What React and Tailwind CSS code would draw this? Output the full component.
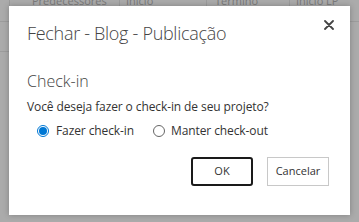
import React from "react";

export default function App() {
  return (
    <div
      className="relative w-[359px] h-[222px] overflow-hidden bg-[#ababab]"
      style={{ fontFamily: '"Open Sans", "Noto Sans", sans-serif' }}
    >
      {/* faded table header behind the overlay */}
      <div className="flex h-[22px] border-b border-[#9c9c9c] text-[11px] text-[#7a7a7a]">
        <div className="w-[10px] border-r border-[#9c9c9c]" />
        <div className="w-[110px] border-r border-[#9c9c9c] pl-[22px] leading-[12px] -mt-[5px] overflow-hidden whitespace-nowrap">Predecessores</div>
        <div className="w-[87px] border-r border-[#9c9c9c] pl-[6px] leading-[12px] -mt-[5px] overflow-hidden whitespace-nowrap">Início</div>
        <div className="w-[83px] border-r border-[#9c9c9c] pl-[8px] leading-[12px] -mt-[5px] overflow-hidden whitespace-nowrap">Término</div>
        <div className="flex-1 pl-[6px] leading-[12px] -mt-[5px] overflow-hidden whitespace-nowrap">Início LP</div>
      </div>
      <div className="h-[30px] w-[10px] border-b border-[#9c9c9c]" />

      {/* dialog */}
      <div className="absolute left-[9px] top-[6px] w-[341px] h-[209px] bg-white shadow-[0_0_6px_rgba(0,0,0,0.25)] flex flex-col">
        <div className="flex items-start justify-between pl-[18px] pr-[16px] pt-[14px]">
          <div className="text-[18px] font-light text-[#444] leading-[26px] tracking-[-0.3px]">
            Fechar - Blog - Publicação
          </div>
          <svg width="10" height="10" viewBox="0 0 10 10" className="mt-0">
            <path d="M1 1 L9 9 M9 1 L1 9" stroke="#444" strokeWidth="1.8" strokeLinecap="round" />
          </svg>
        </div>
        <div className="pl-[18px] mt-[24px] text-[16px] font-light text-[#444] leading-[22px]">Check-in</div>
        <div className="pl-[18px] mt-[6px] text-[12px] text-[#333] leading-[18px] tracking-[-0.1px]">
          Você deseja fazer o check-in de seu projeto?
        </div>
        <div className="flex items-center pl-[28px] mt-[6px] text-[12px] text-[#333] leading-[18px] tracking-[-0.1px]">
          <span className="w-[12px] h-[12px] rounded-full border border-[#0078d4] flex items-center justify-center">
            <span className="w-[8px] h-[8px] rounded-full bg-[#0078d4]" />
          </span>
          <span className="ml-[7px]">Fazer check-in</span>
          <span className="ml-[19px] w-[12px] h-[12px] rounded-full border border-[#666]" />
          <span className="ml-[6px]">Manter check-out</span>
        </div>
        <div className="flex justify-end gap-[14px] pr-[21px] mt-[17px]">
          <button className="w-[62px] h-[29px] rounded-[3px] border-2 border-[#1a1a1a] bg-white text-[11px] text-[#333]">
            OK
          </button>
          <button className="w-[62px] h-[29px] border border-[#c8c8c8] bg-white text-[11px] text-[#333]">
            Cancelar
          </button>
        </div>
      </div>
    </div>
  );
}
